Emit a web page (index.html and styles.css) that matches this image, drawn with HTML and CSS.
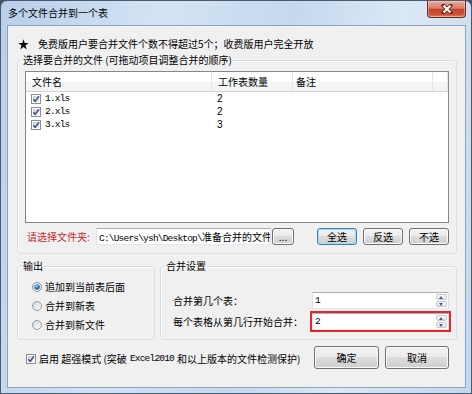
FILE: index.html
```html
<!DOCTYPE html>
<html lang="zh-CN">
<head>
  <meta charset="UTF-8">
  <meta name="viewport" content="width=device-width, initial-scale=1.0">
  <title>多个文件合并到一个表</title>
  <link rel="stylesheet" href="styles.css">
</head>
<body>

  <!-- shared glyphs: checkbox, radio buttons -->
  <svg class="svg-defs" width="0" height="0">
    <defs>
      <linearGradient id="box-fill" x1="0" y1="0" x2="1" y2="1">
        <stop offset="0" stop-color="#c9ccd2"/>
        <stop offset="1" stop-color="#f4f4f5"/>
      </linearGradient>
      <linearGradient id="radio-fill" x1="0" y1="0" x2="1" y2="1">
        <stop offset="0" stop-color="#d4d6d9"/>
        <stop offset="1" stop-color="#fbfbfb"/>
      </linearGradient>
      <radialGradient id="radio-dot" cx="0.4" cy="0.35" r="0.7">
        <stop offset="0" stop-color="#b9e2fa"/>
        <stop offset="0.45" stop-color="#3d86d0"/>
        <stop offset="1" stop-color="#1a4a92"/>
      </radialGradient>
      <symbol id="check-on" viewBox="0 0 10 10">
        <rect x="0.5" y="0.5" width="9" height="9" fill="#fdfdfd" stroke="#8e8f8f"/>
        <rect x="2" y="2" width="6" height="6" fill="url(#box-fill)"/>
        <path d="M2.3 5.2 L4.2 7.4 L8 2.2" fill="none" stroke="#3a4f8a" stroke-width="1.5"/>
      </symbol>
      <symbol id="radio-off" viewBox="0 0 10 10">
        <circle cx="5" cy="5" r="4.5" fill="url(#radio-fill)" stroke="#9a9b9c"/>
      </symbol>
      <symbol id="radio-on" viewBox="0 0 10 10">
        <circle cx="5" cy="5" r="4.5" fill="#f2f3f4" stroke="#8b8c8d"/>
        <circle cx="5" cy="5" r="2.8" fill="url(#radio-dot)"/>
      </symbol>
    </defs>
  </svg>

  <div class="window">
    <div class="titlebar">
      <span class="title">多个文件合并到一个表</span>
      <span class="close-btn">
        <svg width="12" height="10" viewBox="0 0 12 10">
          <path d="M2.5 1.5 L9.5 8.5 M9.5 1.5 L2.5 8.5" stroke="#5a2018" stroke-width="3.6" stroke-linecap="square"/>
          <path d="M2.5 1.5 L9.5 8.5 M9.5 1.5 L2.5 8.5" stroke="#fff" stroke-width="2"/>
        </svg>
      </span>
    </div>

    <div class="client">
      <div class="notice">
        <svg class="star" width="11" height="11" viewBox="0 0 11 11">
          <path d="M5.5 0.3 L6.8 4.1 L10.7 4.1 L7.6 6.5 L8.7 10.4 L5.5 8.1 L2.3 10.4 L3.4 6.5 L0.3 4.1 L4.2 4.1 Z" fill="#111"/>
        </svg>
        <span>免费版用户要合并文件个数不得超过5个；收费版用户完全开放</span>
      </div>

      <fieldset class="group group-files">
        <legend>选择要合并的文件 (可拖动项目调整合并的顺序)</legend>
        <div class="group-body">
          <div class="listview">
            <div class="lv-header">
              <span class="col col-name">文件名</span>
              <span class="col col-count">工作表数量</span>
              <span class="col col-note">备注</span>
              <span class="col col-rest"></span>
            </div>
            <div class="lv-row">
              <span class="col col-name"><svg class="check"><use href="#check-on"/></svg><span class="mono">1.xls</span></span>
              <span class="col col-count">2</span>
            </div>
            <div class="lv-row">
              <span class="col col-name"><svg class="check"><use href="#check-on"/></svg><span class="mono">2.xls</span></span>
              <span class="col col-count">2</span>
            </div>
            <div class="lv-row">
              <span class="col col-name"><svg class="check"><use href="#check-on"/></svg><span class="mono">3.xls</span></span>
              <span class="col col-count">3</span>
            </div>
          </div>

          <div class="path-row">
            <span class="path-label">请选择文件夹:</span>
            <div class="textbox path-box"><span class="mono">C:\Users\ysh\Desktop\</span>准备合并的文件</div>
            <button class="btn btn-browse">...</button>
            <div class="select-btns">
              <button class="btn btn-default">全选</button>
              <button class="btn">反选</button>
              <button class="btn">不选</button>
            </div>
          </div>
        </div>
      </fieldset>

      <div class="options">
        <fieldset class="group group-output">
          <legend>输出</legend>
          <div class="output-body">
            <label class="radio"><svg class="radio-mark"><use href="#radio-on"/></svg>追加到当前表后面</label>
            <label class="radio"><svg class="radio-mark"><use href="#radio-off"/></svg>合并到新表</label>
            <label class="radio"><svg class="radio-mark"><use href="#radio-off"/></svg>合并到新文件</label>
          </div>
        </fieldset>

        <fieldset class="group group-merge">
          <legend>合并设置</legend>
          <div class="merge-body">
            <div class="field-row">
              <span>合并第几个表：</span>
              <div class="textbox spin-box">
                <span class="mono">1</span>
                <span class="spin"><span class="spin-up"></span><span class="spin-down"></span></span>
              </div>
            </div>
            <div class="field-row">
              <span>每个表格从第几行开始合并：</span>
              <div class="textbox spin-box marked">
                <span class="mono">2</span>
                <span class="spin"><span class="spin-up"></span><span class="spin-down"></span></span>
              </div>
            </div>
          </div>
        </fieldset>
      </div>

      <div class="footer">
        <label class="check-label"><svg class="check"><use href="#check-on"/></svg>启用 超强模式 (突破<span class="mono">Excel2010</span>和以上版本的文件检测保护)</label>
        <button class="btn btn-big">确定</button>
        <button class="btn btn-big">取消</button>
      </div>
    </div>
  </div>

</body>
</html>
```

FILE: styles.css
```css
* { box-sizing: border-box; }
body {
  margin: 0;
  background: #46515d;
  font-family: "Noto Sans CJK SC", "Noto Sans", sans-serif;
  font-size: 10px;
  line-height: 14px;
  color: #000;
}
.svg-defs { display: block; width: 0; height: 0; }
.mono {
  font-family: "Liberation Mono", "Noto Sans CJK SC", monospace;
  font-size: 9.5px;
  letter-spacing: -0.8px;
}

/* window frame */
.window {
  width: 472px;
  height: 394px;
  display: flex;
  flex-direction: column;
  padding: 0 5px 5px 6px;
  border: 1px solid #4a5a6e;
  border-radius: 7px 7px 0 0;
  background: linear-gradient(100deg, #b8cfe8 0%, #d3e3f4 30%, #c5d9ee 55%, #dbe8f6 75%, #c3d7ed 100%);
}
.titlebar {
  height: 24px;
  display: flex;
  align-items: flex-start;
}
.title { margin: 5px 0 0 1px; }
.close-btn {
  margin-left: auto;
  width: 39px;
  height: 17px;
  display: flex;
  align-items: center;
  justify-content: center;
  border: 1px solid #6b2b22;
  border-top: none;
  border-radius: 0 0 4px 4px;
  background: linear-gradient(#e9ab9c 0%, #d97c68 45%, #c5412c 52%, #cf533b 85%, #e5875f 100%);
  box-shadow: inset 0 0 0 1px rgba(255, 220, 210, 0.45);
}

.client {
  flex: 1;
  display: flex;
  flex-direction: column;
  padding: 11px 8px 0 9px;
  border: 1px solid #8da2bb;
  background: #f0f0f0;
}
.notice {
  height: 14px;
  display: flex;
  align-items: center;
  gap: 9px;
  margin-left: 1px;
}

/* group boxes */
.group {
  margin: 0;
  padding: 0;
  min-width: 0;
  border: 1px solid #d5dfe5;
  border-radius: 3px;
  box-shadow: inset 1px 1px 0 #fff;
}
.group legend {
  margin-left: 4px;
  padding: 0 1px;
  line-height: 14px;
}
.group-files { margin-top: 2px; }
.group-body { padding: 4px 7px 8px 7px; }

/* list view */
.listview {
  height: 152px;
  border: 1px solid #828790;
  background: #fff;
}
.lv-header {
  height: 20px;
  display: flex;
  border-bottom: 1px solid #d5d5d5;
  background: linear-gradient(#ffffff 0%, #ffffff 45%, #f4f5f7 55%, #f1f2f4 100%);
}
.lv-header .col {
  line-height: 19px;
  border-right: 1px solid #e3e6ea;
}
.col-name { width: 186px; padding-left: 6px; }
.col-count { width: 81px; padding-left: 6px; }
.col-note { width: 140px; padding-left: 3px; }
.col-rest { flex: 1; }
.lv-row {
  height: 13px;
  display: flex;
  line-height: 13px;
}
.lv-row .col-name {
  display: flex;
  align-items: center;
  gap: 4px;
  padding-left: 5px;
}
.lv-row .col-count {
  padding-left: 5px;
  font-family: "Liberation Sans", sans-serif;
  font-size: 10px;
}
.check { width: 10px; height: 10px; flex: none; }

/* folder row */
.path-row {
  height: 17px;
  margin-top: 5px;
  display: flex;
}
.path-label {
  width: 71px;
  padding-left: 2px;
  line-height: 17px;
  white-space: nowrap;
  color: #c8262c;
}
.textbox {
  height: 17px;
  background: #fff;
  border: 1px solid;
  border-color: #abadb3 #dbdfe6 #e3e9ef #e2e3ea;
}
.path-box {
  width: 175px;
  padding-left: 2px;
  line-height: 15px;
  white-space: nowrap;
  overflow: hidden;
}
.btn {
  height: 17px;
  padding: 0;
  font: inherit;
  line-height: 15px;
  color: #000;
  border: 1px solid #707070;
  border-radius: 3px;
  background: linear-gradient(#f2f2f2 0%, #ebebeb 50%, #dddddd 50%, #cfcfcf 100%);
  box-shadow: inset 0 0 0 1px #fbfbfb;
}
.btn-browse { width: 22px; margin-left: 1px; line-height: 13px; }
.select-btns {
  margin-left: auto;
  display: flex;
  gap: 6px;
}
.select-btns .btn { width: 40px; }
.btn-default {
  border-color: #3c7fb1;
  box-shadow: inset 0 0 0 1px #a6dcf4;
}

/* output + merge settings */
.options {
  margin-top: 5px;
  display: flex;
  gap: 5px;
}
.options .group { height: 81px; }
.group-output { width: 138px; }
.group-merge { flex: 1; }
.output-body { padding: 4px 0 0 14px; }
.radio {
  height: 19px;
  display: flex;
  align-items: center;
  gap: 3px;
}
.radio-mark { width: 10px; height: 10px; }
.merge-body { padding: 19px 7px 0 12px; }
.field-row {
  height: 17px;
  display: flex;
  align-items: center;
}
.field-row + .field-row { margin-top: 4px; }
.spin-box {
  width: 137px;
  margin-left: auto;
  display: flex;
  align-items: center;
  padding-left: 2px;
  line-height: 15px;
}
.spin-box.marked { outline: 2px solid #e2282e; }
.spin {
  margin-left: auto;
  margin-right: 1px;
  width: 11px;
  height: 13px;
  display: flex;
  flex-direction: column;
  gap: 1px;
}
.spin-up, .spin-down {
  flex: 1;
  position: relative;
  border: 1px solid #c3cad3;
  border-radius: 2px;
  background: linear-gradient(#f7f8f9, #e2e5e9);
}
.spin-up::after, .spin-down::after {
  content: "";
  position: absolute;
  left: 2px;
  border-left: 2.5px solid transparent;
  border-right: 2.5px solid transparent;
}
.spin-up::after { top: 1px; border-bottom: 3px solid #4c6286; }
.spin-down::after { top: 1px; border-top: 3px solid #4c6286; }

/* footer */
.footer {
  height: 23px;
  margin-top: 6px;
  display: flex;
  align-items: center;
  gap: 6px;
  padding-left: 9px;
}
.check-label {
  display: flex;
  align-items: center;
  gap: 3px;
  padding-top: 3px;
  margin-right: auto;
  white-space: nowrap;
}
.btn-big { height: 23px; width: 65px; }
.btn-big + .btn-big { width: 64px; margin-right: 8px; }
```
